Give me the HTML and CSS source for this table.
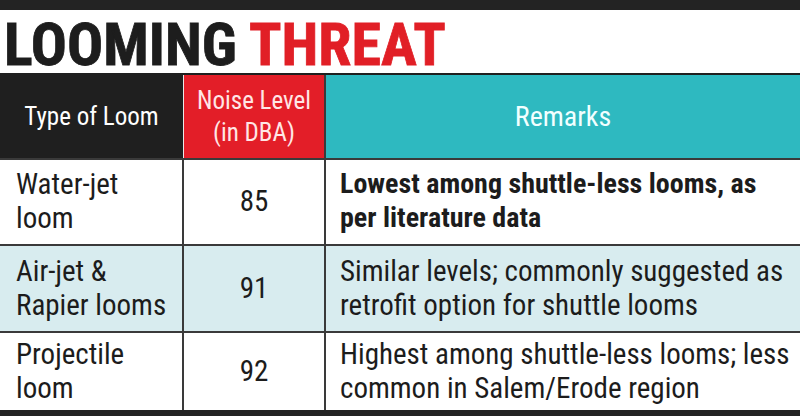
FILE: index.html
```html
<!DOCTYPE html>
<html>
<head>
<meta charset="utf-8">
<link rel="stylesheet" href="styles.css">
</head>
<body>
<div class="page">
  <div class="topbar"></div>
  <h1 class="title"><span class="dark">LOOMING</span> <span class="red">THREAT</span></h1>
  <div class="grid">
    <div class="hd hd-type">Type of Loom</div>
    <div class="hd hd-noise">Noise Level<br>(in DBA)</div>
    <div class="hd hd-rem">Remarks</div>

    <div class="c c-type">Water-jet<br>loom</div>
    <div class="c c-num">85</div>
    <div class="c c-rem bold">Lowest among shuttle-less looms, as<br>per literature data</div>

    <div class="c c-type alt">Air-jet &amp;<br>Rapier looms</div>
    <div class="c c-num alt">91</div>
    <div class="c c-rem alt">Similar levels; commonly suggested as<br>retrofit option for shuttle looms</div>

    <div class="c c-type last">Projectile<br>loom</div>
    <div class="c c-num last">92</div>
    <div class="c c-rem last">Highest among shuttle-less looms; less<br>common in Salem/Erode region</div>
  </div>
  <div class="bottombar"></div>
</div>
</body>
</html>
```
FILE: styles.css
```css
* { box-sizing: border-box; }
html, body { margin: 0; padding: 0; background: #fff; }
.page {
  width: 800px;
  height: 416px;
  overflow: hidden;
  display: flex;
  flex-direction: column;
  font-family: "Roboto Condensed", "Liberation Sans Narrow", "DejaVu Sans Condensed", sans-serif;
  color: #1c1c1c;
}
.topbar { height: 10px; background: #232323; flex: none; }
.title {
  margin: 0;
  height: 64px;
  padding: 7px 0 0 4px;
  font-family: "Roboto Condensed", "Liberation Sans Narrow", sans-serif;
  font-weight: 700;
  font-size: 60px;
  line-height: 56px;
  white-space: nowrap;
  -webkit-text-stroke: 0.8px currentColor;
}
.title .dark { color: #1d1d1d; }
.title .red { color: #e11f26; }
.grid {
  display: grid;
  grid-template-columns: 184px 142px 1fr;
  grid-template-rows: 83px 86px 87px 79px;
  border-top: 2px solid #1f1f1f;
}
.hd {
  display: flex;
  align-items: center;
  justify-content: center;
  text-align: center;
  font-size: 25px;
  line-height: 32px;
  color: #fff;
}
.hd-type { background: #1f1f1f; border-right: 1px solid #e8e8e8; }
.hd-noise { background: #e31e28; color: #ffe6e6; border-right: 2px solid #3a3a3a; }
.hd-rem { background: #2eb9c0; color: #f2ffff; font-size: 28px; }
.c {
  display: flex;
  align-items: center;
  font-size: 29px;
  line-height: 34px;
  border-top: 2px solid #3a3a3a;
  background: #fff;
  padding-bottom: 2px;
}
.c-type { padding-left: 16px; border-right: 2px solid #3a3a3a; }
.c-num { justify-content: center; border-right: 2px solid #3a3a3a; }
.c-rem { padding-left: 14px; font-size: 29px; }
.bold { font-weight: 700; font-size: 28px; }
.alt { background: #d8ecef; }
.bottombar { height: 8px; background: #232323; flex: none; }
```
